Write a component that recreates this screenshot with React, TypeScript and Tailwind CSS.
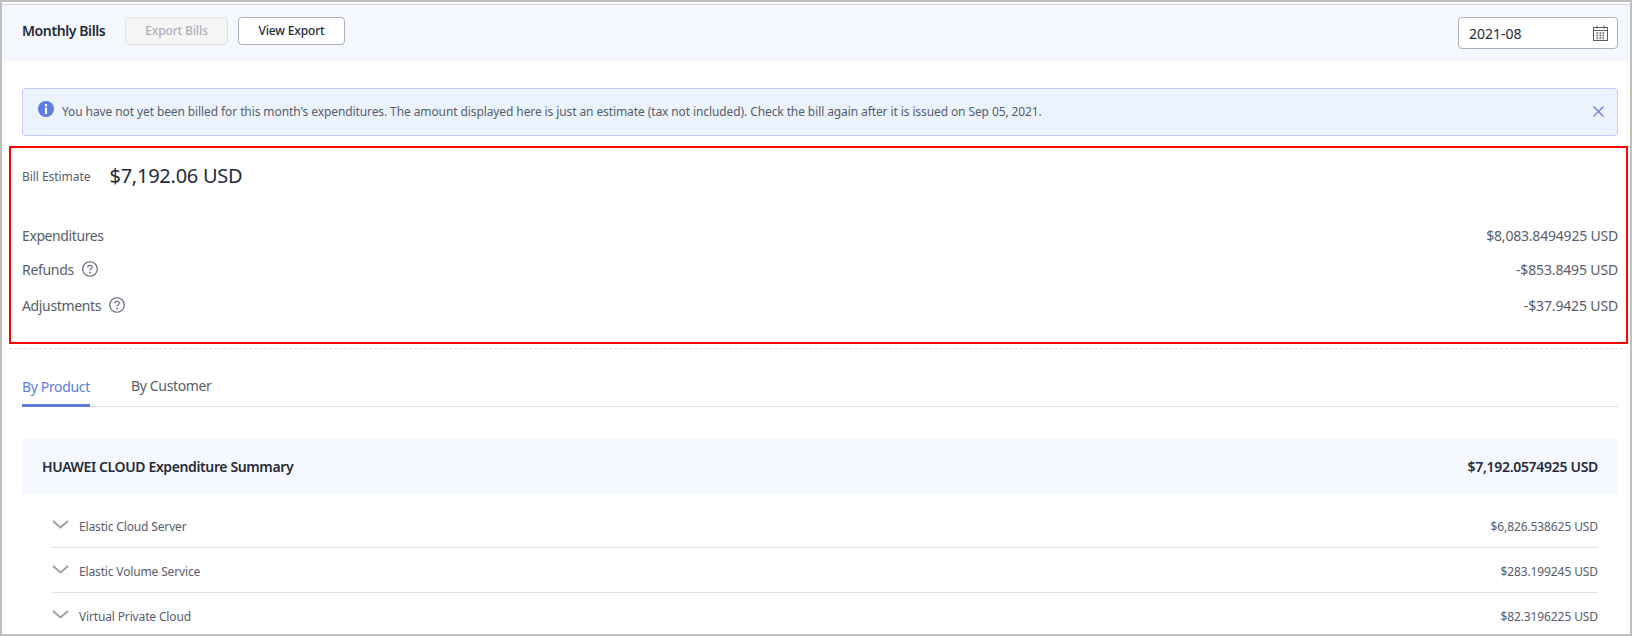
const rows = [
  { name: 'Elastic Cloud Server', amount: '$6,826.538625 USD' },
  { name: 'Elastic Volume Service', amount: '$283.199245 USD' },
  { name: 'Virtual Private Cloud', amount: '$82.3196225 USD' },
];

function InfoIcon() {
  return (
    <svg width="16" height="16" viewBox="0 0 16 16" className="shrink-0 -mt-[7px]">
      <circle cx="8" cy="8" r="8" fill="#5e7ce0" />
      <rect x="6.9" y="3" width="2.2" height="2.2" fill="#fff" />
      <rect x="6.9" y="6.5" width="2.2" height="6.5" fill="#fff" />
    </svg>
  );
}

function CalendarIcon() {
  return (
    <svg width="15" height="16" viewBox="0 0 15 16" className="shrink-0 text-[#575d6c]" fill="none" stroke="currentColor">
      <rect x="0.5" y="2.5" width="14" height="13" />
      <path d="M1 5.5h13M4 0.5v3M11 0.5v3" />
      <path d="M3.5 8h2M6.5 8h2M9.5 8h2M3.5 10.5h2M6.5 10.5h2M9.5 10.5h2M3.5 13h2M6.5 13h2M9.5 13h2" strokeWidth="1.3" strokeDasharray="1.6 0.4" />
    </svg>
  );
}

function CloseIcon() {
  return (
    <svg width="11" height="11" viewBox="0 0 11 11" className="shrink-0 ml-auto -mt-[2px]" stroke="#5e7ce0" strokeWidth="1.2">
      <path d="M0.5 0.5l10 10M10.5 0.5l-10 10" />
    </svg>
  );
}

function HelpIcon() {
  return (
    <svg width="16" height="16" viewBox="0 0 16 16" className="shrink-0 ml-[8px]" fill="none" stroke="#575d6c" strokeWidth="1.1">
      <circle cx="8" cy="8" r="7.3" />
      <path d="M5.7 6.3c0-1.3 1-2.1 2.3-2.1s2.3.8 2.3 2c0 1.7-2.3 1.6-2.3 3.3" />
      <circle cx="8" cy="11.6" r="0.35" />
    </svg>
  );
}

function Chevron() {
  return (
    <svg width="17" height="9" viewBox="0 0 17 9" className="shrink-0 -mt-[5px] mr-[10px]" fill="none" stroke="#9a9da5" strokeWidth="1.8">
      <path d="M1 1l7.5 6.5L16 1" />
    </svg>
  );
}

export default function App() {
  return (
    <div className="w-[1632px] h-[636px] overflow-hidden bg-white border-2 border-[#bfbfbf] text-[#252b3a] font-['Noto_Sans',sans-serif] text-[14px]">
      <div className="h-[3px] border-b border-[#d4d4d4]" />
      <div className="h-[56px] bg-[#f5f8fe] flex items-start pl-5 pr-[12px] pt-3">
        <span className="w-[103px] font-semibold text-[14px] leading-[28px] tracking-[-0.4px] whitespace-nowrap">Monthly Bills</span>
        <button className="w-[103px] h-[28px] rounded-sm border border-[#dfe1e6] bg-[#f5f5f6] text-[#adb0b8] text-[12px] font-medium tracking-[-0.15px]">
          Export Bills
        </button>
        <button className="ml-[10px] w-[107px] h-[28px] rounded-sm border border-[#adb0b8] bg-white text-[12px] font-medium tracking-[-0.15px]">
          View Export
        </button>
        <div className="ml-auto w-[160px] h-[32px] rounded-sm border border-[#adb0b8] bg-white flex items-center justify-between pl-[10px] pr-[9px]">
          <span className="text-[14px]">2021-08</span>
          <CalendarIcon />
        </div>
      </div>
      <div className="ml-5 mr-[12px] mt-[27px] h-[48px] rounded-sm border border-[#beccfa] bg-[#ebf4fe] flex items-center pl-[15px] pr-[13px]">
        <InfoIcon />
        <span className="ml-[8px] text-[12px] text-[#575d6c] tracking-[-0.1px] whitespace-nowrap">
          You have not yet been billed for this month's expenditures. The amount displayed here is just an estimate (tax not included). Check the bill again after it is issued on Sep 05, 2021.
        </span>
        <CloseIcon />
      </div>
      <div className="ml-[7px] mr-[2px] mt-[10px] h-[198px] border-2 border-[#ff0000] pl-[11px] pr-[8px]">
        <div className="flex items-center h-[28px] mt-[15px]">
          <span className="text-[12px] text-[#575d6c] mr-[19px] tracking-[-0.05px]">Bill Estimate</span>
          <span className="text-[20px] tracking-[-0.25px] -mt-[2px]">$7,192.06 USD</span>
        </div>
        <div className="mt-[27px] flex justify-between h-[34px] items-center text-[#575d6c]">
          <span className="tracking-[-0.4px]">Expenditures</span>
          <span className="tracking-[-0.2px]">$8,083.8494925 USD</span>
        </div>
        <div className="mt-[1px] flex justify-between h-[32px] items-center text-[#575d6c]">
          <span className="flex items-center tracking-[-0.3px]">
            Refunds
            <HelpIcon />
          </span>
          <span className="tracking-[-0.15px]">-$853.8495 USD</span>
        </div>
        <div className="mt-[3px] flex justify-between h-[34px] items-center text-[#575d6c]">
          <span className="flex items-center tracking-[-0.35px]">
            Adjustments
            <HelpIcon />
          </span>
          <span className="tracking-[-0.15px]">-$37.9425 USD</span>
        </div>
      </div>
      <div className="ml-[7px] mr-[2px] mt-[4px] border-t border-dashed border-[#dfe1e6]" />
      <div className="ml-5 mr-[12px] mt-[20px] flex items-end h-[38px] border-b border-[#dfe1e6] text-[14px]">
        <div className="h-[38px] w-[68px] border-b-[3px] border-[#5e7ce0] text-[#5e7ce0] -mb-px leading-[36px] tracking-[-0.35px] whitespace-nowrap">By Product</div>
        <div className="ml-[41px] h-[38px] leading-[36px] text-[#575d6c] tracking-[-0.35px] whitespace-nowrap">By Customer</div>
      </div>
      <div className="ml-5 mr-[12px] mt-[31px] h-[56px] bg-[#f5f8fe] flex items-center justify-between px-5 font-semibold">
        <span className="tracking-[-0.38px]">HUAWEI CLOUD Expenditure Summary</span>
        <span className="tracking-[-0.3px]">$7,192.0574925 USD</span>
      </div>
      <div className="ml-[50px] mr-[32px] mt-[9px]">
        {rows.map((row) => (
          <div key={row.name} className="h-[45px] border-b border-[#dfe1e6] flex items-center justify-between text-[12px] text-[#575d6c] pt-[4px]">
            <span className="flex items-center tracking-[-0.15px]">
              <Chevron />
              {row.name}
            </span>
            <span className="tracking-[-0.1px]">{row.amount}</span>
          </div>
        ))}
      </div>
    </div>
  );
}
